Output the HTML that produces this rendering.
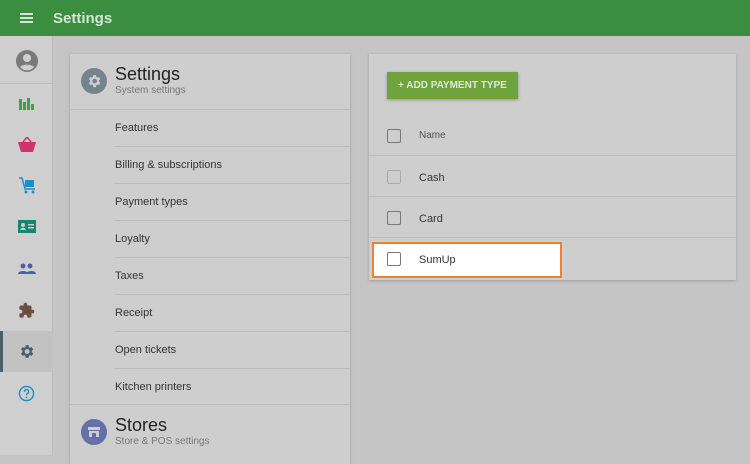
<!DOCTYPE html>
<html><head><style>
*{margin:0;padding:0;box-sizing:border-box}
html,body{background:#c5c5c5}
body{width:750px;height:455px;overflow:hidden;font-family:"Liberation Sans",Arial,sans-serif;position:relative}
.hdr{position:absolute;left:0;top:0;width:750px;height:36px;background:#3b8d40;color:#d4e6d5}
.hdr .t{position:absolute;left:53px;top:10px;font-size:15px;font-weight:bold}
.side{position:absolute;left:0;top:36px;width:53px;height:419px;background:#cfcfcf;border-right:1px solid #bcbcbc}
.ic{position:absolute;left:16px}
.card{position:absolute;background:#cecece;box-shadow:0 1px 3px rgba(0,0,0,.2)}
.row{position:absolute;left:45px;right:0;height:37px;border-bottom:1px solid #bdbdbd;font-size:11px;color:#333;padding-top:12px}
.cb{position:absolute;left:18px;width:14px;height:14px;border:1.5px solid #777;border-radius:2px}
.rr{position:absolute;left:0;right:0;border-bottom:1px solid #bdbdbd;height:41px}
.rr span{position:absolute;left:50px;font-size:11px;color:#333}
</style></head><body>
<div class="hdr">
<div style="position:absolute;left:20px;top:13px;width:13px;height:2px;background:#d4e6d5;box-shadow:0 4px 0 #d4e6d5,0 8px 0 #d4e6d5"></div>
<div class="t">Settings</div></div>
<div class="side">
<svg class="ic" style="top:13px;left:15px" width="24" height="24" viewBox="0 0 24 24"><circle cx="12" cy="12" r="11" fill="#7a7a7a"/><circle cx="12" cy="9" r="4" fill="#cfcfcf"/><path d="M5 18c2-3 12-3 14 0a9 9 0 0 1-14 0z" fill="#cfcfcf"/></svg>
<div style="position:absolute;left:0;top:47px;width:53px;height:1px;background:#bdbdbd"></div>
<svg class="ic" style="top:60px;left:19px" width="16" height="14"><rect x="0" y="3" width="3" height="11" fill="#3ea346"/><rect x="4" y="6" width="3" height="8" fill="#3ea346"/><rect x="8" y="2" width="3" height="12" fill="#3ea346"/><rect x="12" y="8" width="3" height="6" fill="#3ea346"/></svg>
<svg class="ic" style="top:101px;left:18px" width="18" height="15"><path d="M5 5L9 0L13 5" stroke="#d0326a" stroke-width="1.5" fill="none"/><path d="M0 5h18l-3 10H3z" fill="#d0326a"/></svg>
<svg class="ic" style="top:141px;left:18px" width="18" height="17"><path d="M1 1h3l3 11h10" stroke="#1a8fc9" stroke-width="1.5" fill="none"/><rect x="7" y="3" width="9" height="7" fill="#1a8fc9"/><circle cx="8" cy="15" r="1.5" fill="#1a8fc9"/><circle cx="15" cy="15" r="1.5" fill="#1a8fc9"/></svg>
<svg class="ic" style="top:184px;left:18px" width="18" height="13"><rect width="18" height="13" fill="#14876e"/><circle cx="5" cy="5" r="2" fill="#cfcfcf"/><path d="M2 10c1-3 5-3 6 0z" fill="#cfcfcf"/><rect x="10" y="4" width="6" height="1.5" fill="#cfcfcf"/><rect x="10" y="7" width="6" height="1.5" fill="#cfcfcf"/></svg>
<svg class="ic" style="top:227px;left:18px" width="18" height="11"><circle cx="5" cy="3" r="2.5" fill="#4b5fa8"/><circle cx="12" cy="3" r="2.5" fill="#4b5fa8"/><path d="M0 11c0-4 10-4 10 0zM8 11c1-4 10-4 10 0z" fill="#4b5fa8"/></svg>
<svg class="ic" style="top:266px;left:18px" width="17" height="17" viewBox="0 0 24 24"><path d="M20.5 11H19V7c0-1.1-.9-2-2-2h-4V3.5a2.5 2.5 0 0 0-5 0V5H4c-1.1 0-2 .9-2 2v3.8h1.5c1.5 0 2.7 1.2 2.7 2.7S5 16.2 3.5 16.2H2V20c0 1.1.9 2 2 2h3.8v-1.5c0-1.5 1.2-2.7 2.7-2.7s2.7 1.2 2.7 2.7V22H17c1.1 0 2-.9 2-2v-4h1.5a2.5 2.5 0 0 0 0-5z" fill="#6d4c41"/></svg>
<div style="position:absolute;left:0;top:295px;width:53px;height:41px;background:#c2c2c2;border-left:3px solid #4c5d6a"></div>
<svg class="ic" style="top:307px;left:18px" width="17" height="17" viewBox="0 0 24 24"><path d="M19.4 13a7.5 7.5 0 0 0 0-2l2.1-1.6-2-3.5-2.5 1a7 7 0 0 0-1.7-1L14.9 3h-4l-.4 2.9a7 7 0 0 0-1.7 1l-2.5-1-2 3.5L6.4 11a7.5 7.5 0 0 0 0 2l-2.1 1.6 2 3.5 2.5-1a7 7 0 0 0 1.7 1l.4 2.9h4l.4-2.9a7 7 0 0 0 1.7-1l2.5 1 2-3.5zM12.9 15.5a3.5 3.5 0 1 1 0-7 3.5 3.5 0 0 1 0 7z" fill="#4c5d6a"/></svg>
<svg class="ic" style="top:349px;left:18px" width="17" height="17" viewBox="0 0 24 24"><circle cx="12" cy="12" r="10" stroke="#1a8fc9" stroke-width="2" fill="none"/><path d="M9 9.5a3 3 0 1 1 4 2.8c-1 .4-1 1.2-1 2" stroke="#1a8fc9" stroke-width="2" fill="none"/><circle cx="12" cy="17.5" r="1.2" fill="#1a8fc9"/></svg>
</div>

<div class="card" style="left:70px;top:54px;width:280px;height:410px">
<svg style="position:absolute;left:11px;top:14px" width="26" height="26" viewBox="0 0 26 26"><circle cx="13" cy="13" r="13" fill="#73848f"/><g transform="translate(5 5) scale(.67)"><path d="M19.4 13a7.5 7.5 0 0 0 0-2l2.1-1.6-2-3.5-2.5 1a7 7 0 0 0-1.7-1L14.9 3h-4l-.4 2.9a7 7 0 0 0-1.7 1l-2.5-1-2 3.5L6.4 11a7.5 7.5 0 0 0 0 2l-2.1 1.6 2 3.5 2.5-1a7 7 0 0 0 1.7 1l.4 2.9h4l.4-2.9a7 7 0 0 0 1.7-1l2.5 1 2-3.5zM12.9 15.5a3.5 3.5 0 1 1 0-7 3.5 3.5 0 0 1 0 7z" fill="#cecece"/></g></svg>
<div style="position:absolute;left:45px;top:10px;font-size:18px;color:#222">Settings</div>
<div style="position:absolute;left:45px;top:31px;font-size:10px;color:#777">System settings</div>
<div style="position:absolute;left:0;right:0;top:55px;height:1px;background:#bdbdbd"></div>
<div class="row" style="top:56px">Features</div>
<div class="row" style="top:93px">Billing &amp; subscriptions</div>
<div class="row" style="top:130px">Payment types</div>
<div class="row" style="top:167px">Loyalty</div>
<div class="row" style="top:204px">Taxes</div>
<div class="row" style="top:241px">Receipt</div>
<div class="row" style="top:278px">Open tickets</div>
<div class="row" style="top:315px;left:45px;border:none">Kitchen printers</div>
<div style="position:absolute;left:0;right:0;top:350px;height:1px;background:#bdbdbd"></div>
<svg style="position:absolute;left:11px;top:365px" width="26" height="26"><circle cx="13" cy="13" r="13" fill="#6470a8"/><rect x="7" y="8" width="12" height="3" fill="#cecece"/><rect x="8" y="12" width="10" height="6" fill="#cecece"/><rect x="11" y="14" width="4" height="4" fill="#6470a8"/></svg>
<div style="position:absolute;left:45px;top:361px;font-size:18px;color:#222">Stores</div>
<div style="position:absolute;left:45px;top:382px;font-size:10px;color:#777">Store &amp; POS settings</div>
</div>

<div class="card" style="left:369px;top:54px;width:367px;height:226px">
<div style="position:absolute;left:18px;top:18px;width:131px;height:27px;background:#6fa33b;box-shadow:0 1px 3px rgba(0,0,0,.3);color:#dfe8d3;font-size:10px;font-weight:bold;padding:8px 0 0 11px">+ ADD PAYMENT TYPE</div>
<div class="rr" style="top:61px"><div class="cb" style="top:14px"></div><span style="top:15px;color:#555;font-size:10px">Name</span></div>
<div class="rr" style="top:102px"><div class="cb" style="top:14px;border-color:#aaa"></div><span style="top:16px">Cash</span></div>
<div class="rr" style="top:143px"><div class="cb" style="top:14px"></div><span style="top:16px">Card</span></div>
</div>
<div style="position:absolute;left:372px;top:242px;width:190px;height:36px;background:#fff;border:2.5px solid #f0812e">
<div class="cb" style="left:13px;top:8px"></div><span style="position:absolute;left:45px;top:10px;font-size:11px;color:#333">SumUp</span></div>
</body></html>
